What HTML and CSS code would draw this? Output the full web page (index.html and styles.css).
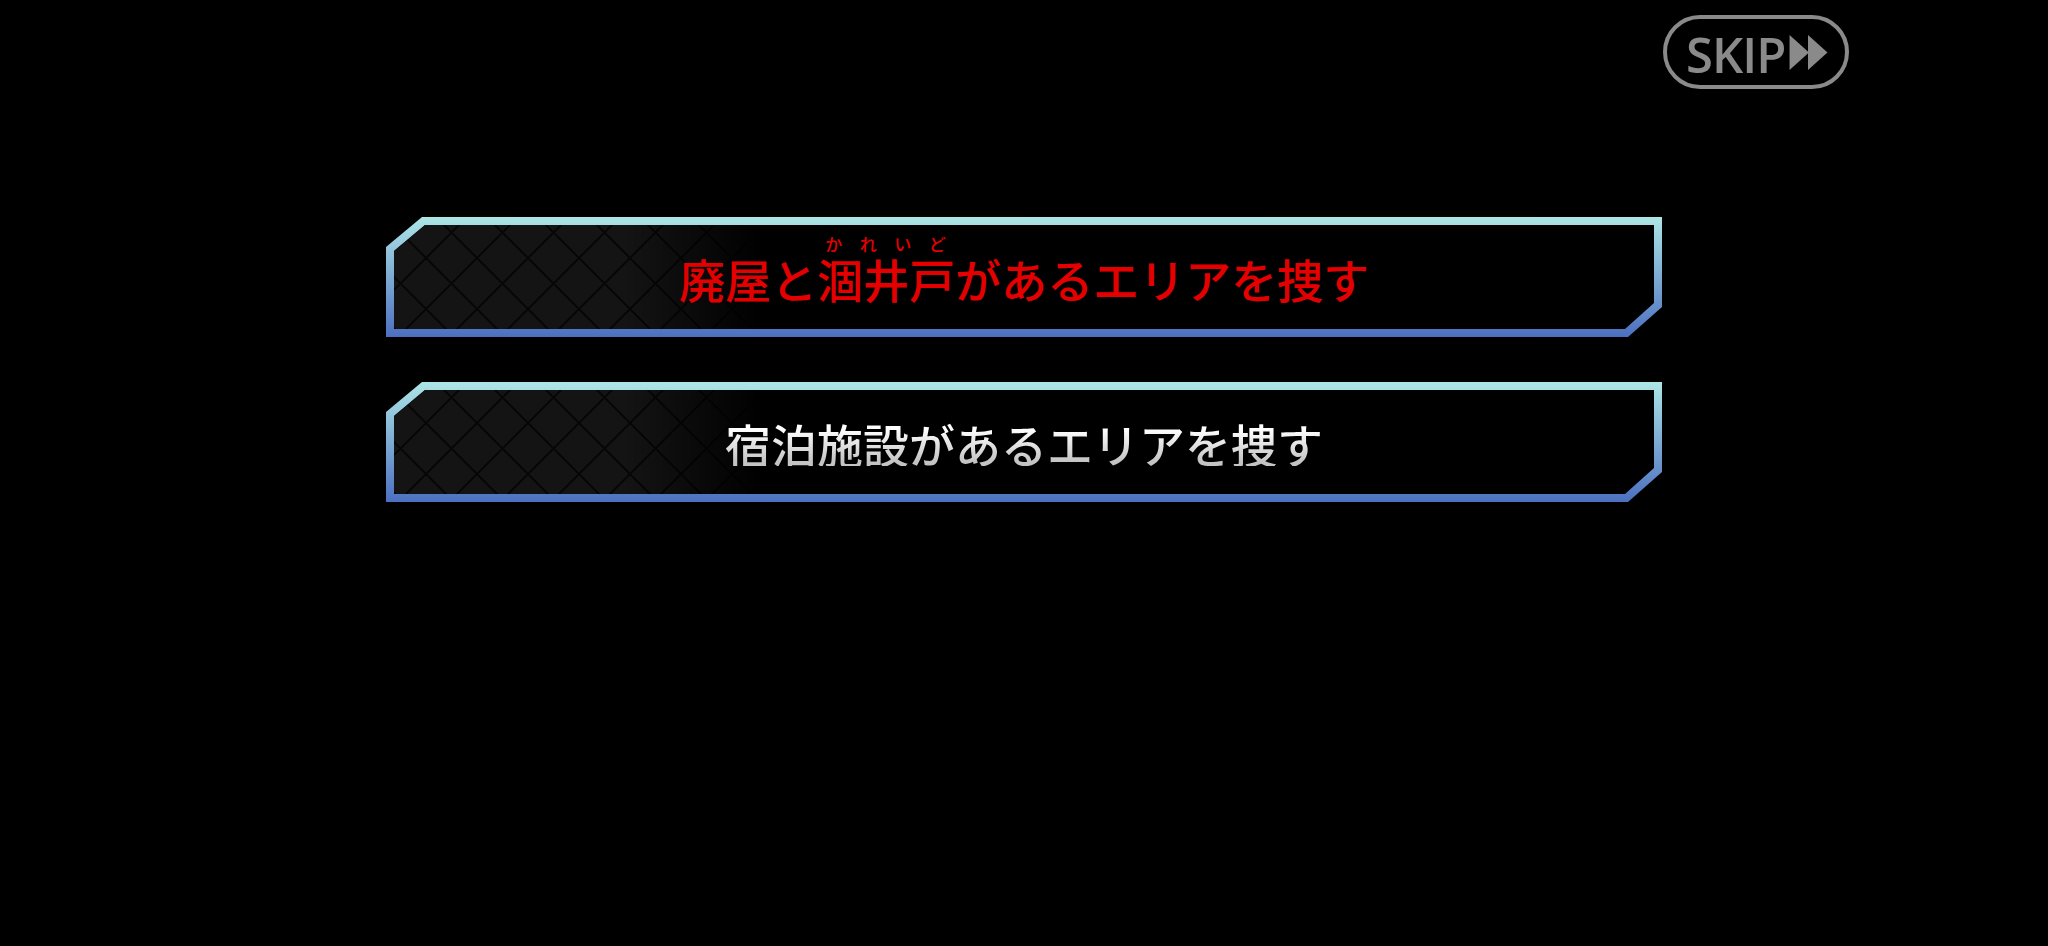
FILE: index.html
```html
<!DOCTYPE html>
<html lang="ja">
<head>
  <meta charset="UTF-8" />
  <meta name="viewport" content="width=device-width, initial-scale=1.0" />
  <title>選択肢</title>
  <link rel="stylesheet" href="styles.css">
</head>
<body>
  <div class="topbar">
    <button class="skip">
      <span>SKIP</span>
      <svg class="skip-arrows" viewBox="0 0 40 36" aria-hidden="true">
        <polygon points="0,0 20,18 0,36" />
        <polygon points="19,0 39,18 19,36" />
      </svg>
    </button>
  </div>

  <div class="choices">
    <div class="choice">
      <div class="choice-body">
        <span class="label label-red">廃屋と<ruby>涸井戸<rt>かれいど</rt></ruby>があるエリアを捜す</span>
      </div>
    </div>
    <div class="choice">
      <div class="choice-body">
        <span class="label label-silver">宿泊施設があるエリアを捜す</span>
      </div>
    </div>
  </div>
</body>
</html>
```

FILE: styles.css
```css
:root {
  --frame-top: #ade6e6;
  --frame-bottom: #4c70c0;
  --skip-gray: #8a8a8a;
}
body {
  margin: 0;
  background: #000;
  min-height: 100vh;
  font-family: "Noto Sans CJK JP", "Noto Sans", sans-serif;
}
.topbar {
  display: flex;
  justify-content: flex-end;
  padding: 15px 199px 0 0;
}
.skip {
  box-sizing: border-box;
  width: 186px;
  height: 74px;
  display: flex;
  align-items: center;
  gap: 4px;
  padding: 3px 0 0 19px;
  border: 4px solid var(--skip-gray);
  border-radius: 37px;
  background: transparent;
  color: var(--skip-gray);
  font-family: "Open Sans", "Liberation Sans", sans-serif;
  font-size: 49px;
  font-weight: 600;
  letter-spacing: -1px;
  cursor: pointer;
}
.skip-arrows {
  width: 40px;
  height: 35px;
  fill: var(--skip-gray);
  margin-top: -3px;
}
.choices {
  display: flex;
  flex-direction: column;
  gap: 45px;
  width: 1276px;
  margin: 128px auto 0;
}
.choice {
  padding: 8px;
  background: linear-gradient(to bottom, var(--frame-top), var(--frame-bottom));
  clip-path: polygon(36px 0, 100% 0, 100% calc(100% - 30px), calc(100% - 34px) 100%, 0 100%, 0 30px);
}
.choice-body {
  position: relative;
  height: 104px;
  display: flex;
  align-items: center;
  justify-content: center;
  background: #000;
  clip-path: polygon(31px 0, 100% 0, 100% calc(100% - 26px), calc(100% - 29px) 100%, 0 100%, 0 26px);
}
/* diamond lattice on the left end, fading out to the right */
.choice-body::before {
  content: "";
  position: absolute;
  top: 0;
  left: 0;
  bottom: 0;
  width: 370px;
  background-color: #141414;
  background-image:
    repeating-linear-gradient(45deg, #070707 0 2px, transparent 2px 36px),
    repeating-linear-gradient(-45deg, #070707 0 2px, transparent 2px 36px);
  -webkit-mask-image: linear-gradient(to right, #000 0, #000 62%, transparent 100%);
  mask-image: linear-gradient(to right, #000 0, #000 62%, transparent 100%);
}
.label {
  position: relative;
  font-size: 46px;
  font-weight: 500;
  line-height: 1;
  white-space: nowrap;
}
.label-red {
  color: #e40000;
  margin-bottom: 22px;
}
.label-red rt {
  font-size: 17px;
  line-height: 1;
  letter-spacing: 1px;
  padding-bottom: 1px;
}
.label-silver {
  margin-top: 2px;
  background: linear-gradient(to bottom, #ffffff 20%, #c4c4c4 90%);
  -webkit-background-clip: text;
  background-clip: text;
  color: transparent;
}
```
